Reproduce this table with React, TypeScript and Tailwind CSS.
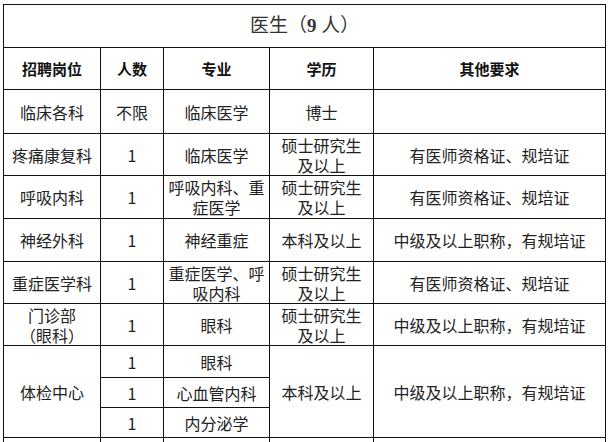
import React from 'react';

type Row = {
  post?: React.ReactNode;
  num: string;
  major: React.ReactNode;
  edu: React.ReactNode;
  other: React.ReactNode;
  h: string;
};

const rows: Row[] = [
  { post: '临床各科', num: '不限', major: '临床医学', edu: '博士', other: '', h: 'h-[44px]' },
  { post: '疼痛康复科', num: '1', major: '临床医学', edu: <>硕士研究生<br />及以上</>, other: '有医师资格证、规培证', h: 'h-[42px]' },
  { post: '呼吸内科', num: '1', major: <>呼吸内科、重<br />症医学</>, edu: <>硕士研究生<br />及以上</>, other: '有医师资格证、规培证', h: 'h-[43px]' },
  { post: '神经外科', num: '1', major: '神经重症', edu: '本科及以上', other: '中级及以上职称，有规培证', h: 'h-[43px]' },
  { post: '重症医学科', num: '1', major: <>重症医学、呼<br />吸内科</>, edu: <>硕士研究生<br />及以上</>, other: '有医师资格证、规培证', h: 'h-[42px]' },
  { post: <>门诊部<br />（眼科）</>, num: '1', major: '眼科', edu: <>硕士研究生<br />及以上</>, other: '中级及以上职称，有规培证', h: 'h-[42px]' },
];

const cell = 'border border-[#111] text-center align-middle p-0 leading-[20px]';

const App: React.FC = () => {
  return (
    <div className="w-[611px] h-[442px] overflow-hidden bg-white pl-[3px] pt-[4px]">
      <table
        className="table-fixed border-collapse w-[602px] text-[16px] text-[#222]"
        style={{ fontFamily: '"Noto Sans CJK SC", "Liberation Sans", sans-serif' }}
      >
        <colgroup>
          <col className="w-[97px]" />
          <col className="w-[63px]" />
          <col className="w-[106px]" />
          <col className="w-[104px]" />
          <col className="w-[232px]" />
        </colgroup>
        <tbody>
          {/* Title */}
          <tr className="h-[43px]">
            <td
              colSpan={5}
              className={`${cell} text-[19px] text-[#333]`}
              style={{ fontFamily: '"Liberation Serif", "Noto Sans CJK SC", serif' }}
            >
              医生（<span className="font-bold">9</span> 人）
            </td>
          </tr>
          {/* Header */}
          <tr className="h-[42px] font-bold text-[15px] text-[#111]">
            <td className={cell}>招聘岗位</td>
            <td className={cell}>人数</td>
            <td className={cell}>专业</td>
            <td className={cell}>学历</td>
            <td className={cell}>其他要求</td>
          </tr>
          {rows.map((r, i) => (
            <tr key={i} className={r.h}>
              <td className={cell}>{r.post}</td>
              <td className={cell}>{r.num}</td>
              <td className={cell}>{r.major}</td>
              <td className={cell}>{r.edu}</td>
              <td className={cell}>{r.other}</td>
            </tr>
          ))}
          {/* 体检中心 */}
          <tr className="h-[32px]">
            <td rowSpan={3} className={cell}>体检中心</td>
            <td className={cell}>1</td>
            <td className={cell}>眼科</td>
            <td rowSpan={3} className={cell}>本科及以上</td>
            <td rowSpan={3} className={cell}>中级及以上职称，有规培证</td>
          </tr>
          <tr className="h-[30px]">
            <td className={cell}>1</td>
            <td className={cell}>心血管内科</td>
          </tr>
          <tr className="h-[30px]">
            <td className={cell}>1</td>
            <td className={cell}>内分泌学</td>
          </tr>
          <tr className="h-[42px]">
            <td className={cell}></td>
            <td className={cell}></td>
            <td className={cell}></td>
            <td className={`${cell} align-top pt-[3px]`}>硕士研究生<br />及以上</td>
            <td className={cell}></td>
          </tr>
        </tbody>
      </table>
    </div>
  );
};

export default App;
